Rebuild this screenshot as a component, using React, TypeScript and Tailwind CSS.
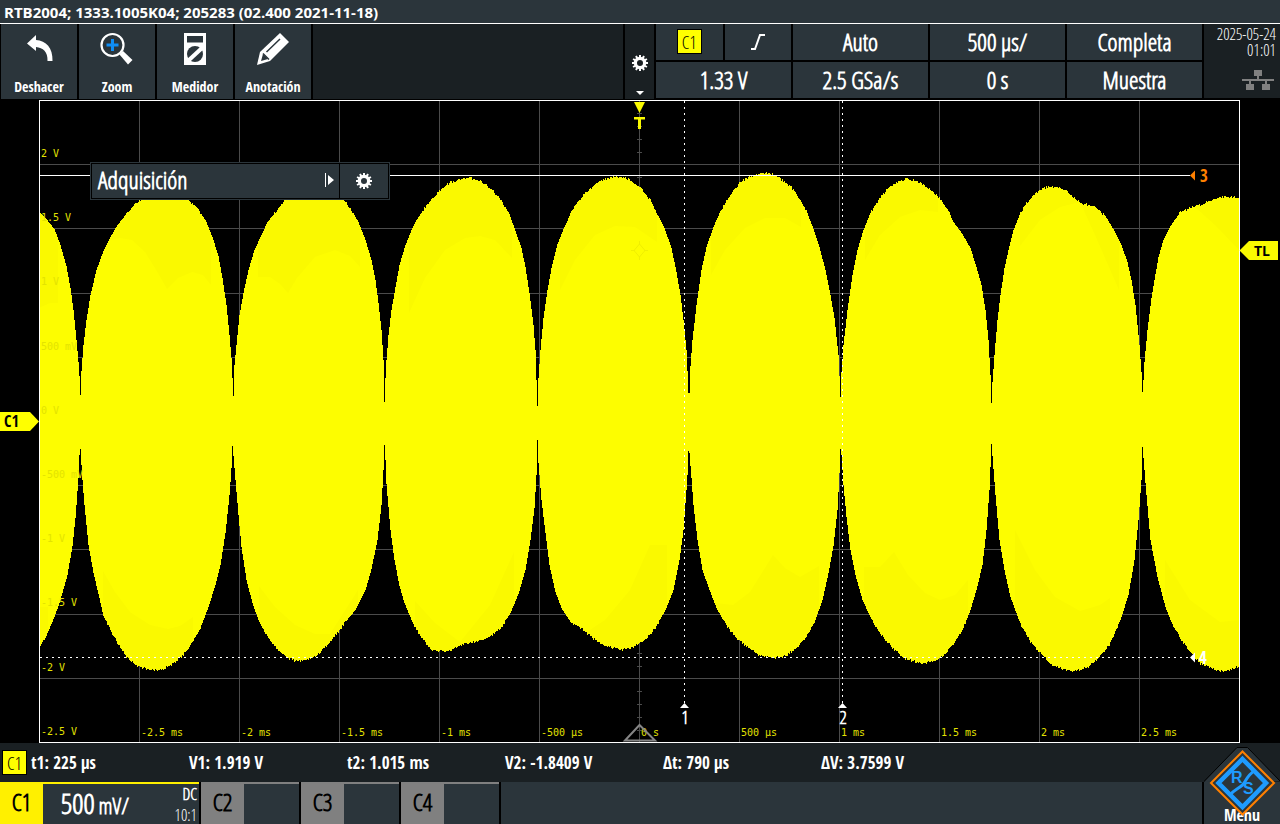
import type { ReactNode } from 'react';

type Point = [number, number];

const UPPER: Point[] = [
  [39, 212], [45, 218], [54, 229], [60, 245], [66, 266], [70, 288], [73, 310], [76, 340], [78, 362], [79, 376], [80, 395],
  [81, 371], [83, 345], [86, 320], [90, 295], [96, 270], [103, 251], [110, 237], [117, 225], [125, 215], [132, 207], [138, 201],
  [155, 191], [172, 191], [187, 199], [196, 207], [205, 220], [212, 237], [218, 256], [222, 278], [226, 305], [229, 335],
  [231, 358], [232, 378], [233, 396], [234, 365], [236, 345], [239, 315], [243, 293], [248, 270], [254, 250], [261, 235],
  [267, 222], [275, 212], [285, 200], [300, 190], [325, 188], [343, 200], [350, 208], [358, 222], [365, 240], [371, 260],
  [375, 280], [378, 303], [381, 330], [383, 360], [384, 402], [385, 378], [386, 360], [388, 335], [391, 310], [394, 293],
  [399, 265], [405, 245], [411, 230], [415, 222], [424, 208], [434, 196], [440, 190], [450, 182], [462, 179], [470, 178],
  [482, 182], [490, 188], [500, 199], [509, 214], [515, 231], [521, 248], [525, 267], [529, 293], [533, 325], [535, 350],
  [536, 380], [537, 406], [538, 378], [540, 350], [543, 318], [547, 290], [551, 268], [557, 244], [564, 227], [570, 214],
  [577, 202], [585, 193], [596, 183], [608, 178], [615, 176], [628, 179], [640, 188], [650, 200], [656, 212], [664, 228],
  [671, 248], [676, 272], [680, 295], [683, 320], [686, 350], [687, 371], [688, 393], [689, 393], [690, 366], [692, 340],
  [696, 305], [701, 270], [706, 247], [713, 227], [720, 211], [730, 195], [740, 182], [750, 176], [763, 173], [772, 174],
  [783, 181], [790, 186], [800, 200], [806, 211], [812, 226], [819, 247], [825, 270], [830, 295], [834, 318], [838, 355],
  [839, 376], [840, 397], [841, 372], [843, 345], [847, 310], [852, 275], [857, 250], [863, 230], [870, 213], [880, 197],
  [890, 186], [900, 180], [908, 179], [920, 182], [930, 190], [940, 199], [948, 211], [953, 222], [962, 234], [970, 248],
  [976, 267], [981, 285], [985, 310], [988, 340], [990, 375], [991, 403], [992, 382], [994, 355], [997, 320], [1000, 295],
  [1004, 268], [1008, 250], [1013, 230], [1019, 215], [1026, 203], [1036, 192], [1046, 187], [1055, 187], [1065, 190],
  [1075, 199], [1080, 203], [1093, 206], [1105, 216], [1114, 231], [1121, 245], [1127, 262], [1131, 280], [1135, 305],
  [1139, 345], [1141, 372], [1142, 392], [1143, 380], [1144, 362], [1147, 330], [1151, 298], [1154, 280], [1158, 257],
  [1163, 240], [1170, 226], [1180, 212], [1192, 207], [1200, 205], [1210, 200], [1225, 196], [1239, 198],
];

const LOWER: Point[] = [
  [39, 647], [45, 638], [54, 617], [60, 600], [67, 575], [72, 546], [75, 518], [78, 478], [79, 455], [80, 449], [81, 465],
  [82, 480], [84, 505], [88, 545], [93, 573], [98, 594], [103, 616], [110, 630], [117, 643], [127, 658], [137, 666],
  [150, 670], [160, 670], [172, 664], [182, 656], [192, 643], [200, 628], [208, 607], [215, 585], [220, 565], [225, 533],
  [229, 495], [231, 468], [232, 446], [233, 456], [235, 480], [238, 515], [241, 547], [246, 580], [252, 603], [258, 620],
  [265, 634], [275, 647], [285, 657], [295, 661], [305, 660], [316, 656], [327, 645], [337, 633], [345, 622], [355, 610],
  [365, 590], [371, 569], [377, 540], [381, 505], [383, 470], [384, 445], [385, 460], [386, 484], [390, 530], [394, 560],
  [399, 586], [404, 603], [412, 622], [420, 637], [432, 650], [445, 652], [453, 649], [464, 643], [480, 641], [490, 636],
  [500, 629], [510, 613], [518, 594], [525, 570], [530, 540], [534, 508], [536, 475], [537, 440], [538, 463], [541, 500],
  [545, 533], [549, 565], [555, 592], [561, 608], [570, 622], [582, 629], [592, 638], [605, 646], [620, 650], [633, 647],
  [645, 640], [655, 628], [665, 610], [673, 590], [679, 560], [683, 530], [686, 490], [687, 475], [688, 451], [689, 453],
  [691, 478], [693, 505], [697, 540], [702, 570], [708, 587], [716, 608], [725, 624], [735, 637], [747, 647], [760, 656],
  [774, 658], [785, 656], [797, 647], [806, 637], [815, 620], [822, 600], [828, 573], [833, 546], [837, 510], [839, 473],
  [840, 449], [841, 455], [843, 485], [846, 517], [850, 550], [855, 575], [862, 600], [870, 617], [880, 634], [893, 649],
  [905, 659], [920, 663], [932, 662], [942, 656], [952, 645], [962, 630], [970, 610], [976, 590], [982, 565], [986, 530],
  [989, 490], [991, 444], [992, 456], [995, 495], [999, 540], [1004, 570], [1010, 597], [1020, 624], [1030, 642],
  [1041, 654], [1050, 664], [1062, 669], [1075, 671], [1088, 667], [1098, 658], [1109, 645], [1115, 631], [1120, 620],
  [1128, 595], [1134, 560], [1138, 520], [1141, 480], [1142, 447], [1143, 458], [1146, 495], [1150, 540], [1157, 577],
  [1165, 607], [1170, 620], [1180, 639], [1192, 654], [1200, 664], [1215, 670], [1225, 671], [1239, 666],
];

function sample(points: Point[], x: number): number {
  const next = points.findIndex((p) => p[0] >= x);
  if (next <= 0) return points[0][1];
  const [x0, y0] = points[next - 1];
  const [x1, y1] = points[next];
  return y0 + ((y1 - y0) * (x - x0)) / (x1 - x0);
}

function jitter(x: number, seed: number): number {
  const n = Math.sin(x * 12.9898 + seed) * 43758.5453;
  return Math.round((n - Math.floor(n)) * 2 - 1);
}

function buildWave(): string {
  const parts: string[] = [];
  for (let x = 40; x < 1239; x++) {
    const top = Math.round(sample(UPPER, x));
    const bottom = Math.round(sample(LOWER, x));
    const y0 = top < 215 ? top + jitter(x, 1) : top;
    const y1 = bottom > 620 ? bottom + jitter(x, 5) : bottom;
    parts.push(`M${x} ${y0}h1V${y1}h-1z`);
  }
  return parts.join('');
}

const WAVE = buildWave();

const SHADES = [
  'M39 170V308L50 303H58V170z',
  'M110 170V240L120 238L132 240L145 252L158 273L167 289L178 278L192 272L203 275L211 285V170z',
  'M258 170V277H270L280 284L288 293L297 278L315 257L335 250L350 256L360 267V170z',
  'M409 170V313L425 278L445 250L465 238L480 236L495 240L512 258V170z',
  'M560 170V290L575 260L595 235L615 226L635 227L657 242V170z',
  'M711 170V275L725 250L745 228L765 218L785 218L801 227V170z',
  'M865 170V260L880 235L900 217L920 210L938 212V170z',
  'M1020 170V246L1040 220L1060 207L1080 202L1095 235L1119 290V170z',
  'M1195 170V207L1215 225L1239 250V170z',
  'M39 680V607H48V680z',
  'M103 680V571L115 592L130 612L150 625L168 629L180 626L193 617V680z',
  'M259 680V586L275 607L295 625L315 634L330 634L358 590V680z',
  'M415 680V601L435 623L460 642L490 605L514 552V680z',
  'M575 680V630H590L605 620L630 590L650 545H667V680z',
  'M715 680V603L733 605L750 592L773 555L785 568L800 577L819 566V680z',
  'M864 680V567H880L894 552L908 575L925 593L940 600L955 595L968 580V680z',
  'M1015 680V530L1035 570L1055 597L1080 611L1100 605L1110 598V680z',
  'M1165 680V560L1190 600L1220 622L1239 620V680z',
];

const GRID_X = [139, 239, 339, 439, 539, 639, 739, 839, 939, 1039, 1139];
const GRID_Y = [164, 228, 293, 357, 421, 485, 549, 614, 678];
const VOLT_LABELS = ['2 V', '1.5 V', '1 V', '500 mV', '0 V', '-500 mV', '-1 V', '-1.5 V', '-2 V', '-2.5 V'];
const TIME_LABELS = ['-2.5 ms', '-2 ms', '-1.5 ms', '-1 ms', '-500 µs', '0 s', '500 µs', '1 ms', '1.5 ms', '2 ms', '2.5 ms'];
const TICKS = Array.from({ length: 49 }, (_, i) => Math.round(113 + i * 12.85));

function Plot() {
  return (
    <svg viewBox="0 99 1280 644" className="block h-auto w-full bg-black" role="img" aria-label="C1">
      <defs>
        <clipPath id="wave">
          <path d={WAVE} />
        </clipPath>
      </defs>
      <g fill="none" stroke="#4b4b4b" shapeRendering="crispEdges">
        {GRID_X.map((x) => (
          <path key={x} d={`M${x + 0.5} 101V742`} />
        ))}
        {GRID_Y.map((y) => (
          <path key={y} d={`M40 ${y + 0.5}H1239`} />
        ))}
        {TICKS.map((y) => (
          <path key={y} d={`M637 ${y + 0.5}h5`} />
        ))}
      </g>
      <path d={WAVE} fill="#fdfd00" shapeRendering="crispEdges" />
      <g clipPath="url(#wave)" fill="#faf900">
        {SHADES.map((d) => (
          <path key={d} d={d} />
        ))}
      </g>
      <g fill="#e3e300" className="font-['DejaVu_Sans_Mono',monospace] text-[10px]">
        {VOLT_LABELS.map((t, i) => (
          <text key={t} x={41} y={Math.round(157 + i * 64.2)}>{t}</text>
        ))}
        {TIME_LABELS.map((t, i) => (
          <text key={t} x={141 + i * 100} y={736}>{t}</text>
        ))}
      </g>
      <path d="M639.5 244l5.500 6.500-5.500 6.500-5.500-6.500zM639.500 241v4M639.500 256v4M631 250.500h4M644 250.500h4" fill="none" stroke="#f0ef00" />
      <path d="M625 740.500L639.500 725L655 740.500z" fill="none" stroke="#858585" strokeWidth="2" />
      <g fill="none" stroke="#fff" shapeRendering="crispEdges">
        <path d="M39.500 742.500V100.500H1239.500V742.500z" />
        <path d="M40 175.500H1190" />
        <path d="M40 657.500H1190" strokeDasharray="2 4" />
        <path d="M684.500 101V703M842.500 101V703" strokeDasharray="2 4" />
      </g>
      <path d="M1190 175.500l5-5v10z" fill="#ff8000" />
      <path d="M1190 657.500l5-5v10zM680 708h9l-4.500-5zM838 708h9l-4.500-5z" fill="#fff" />
      <g className="font-['Open_Sans_Condensed','Roboto',sans-serif] text-[17px] font-bold" fill="#fff" textAnchor="middle">
        <text x="1204" y="182" fill="#ff8000">3</text>
        <text x="1203" y="664">4</text>
      </g>
      <g className="font-['Open_Sans_Condensed_Light','Roboto',sans-serif] text-[18px] font-bold" fill="#fff" textAnchor="middle">
        <text x="685" y="724">1</text>
        <text x="843" y="724">2</text>
      </g>
      <path d="M634 102h11l-5.500 11z" fill="#fafa00" />
      <path d="M634 117h11v2.500h-4v9.500h-3v-9.500h-4z" fill="#fafa00" />
      <path d="M0 412H30L39 421.500L30 431H0z" fill="#ff0" />
      <path d="M1239.500 250.500L1249 241H1278V260H1249z" fill="#fafa00" />
      <text x="4" y="427" className="font-['Open_Sans_Condensed','Roboto',sans-serif] text-[16px] font-bold">C1</text>
      <text x="1254" y="256" className="font-['Open_Sans',sans-serif] text-[14px] font-bold">TL</text>
    </svg>
  );
}

function Gear() {
  return (
    <svg width="16" height="16" viewBox="-8 -8 16 16" aria-hidden="true">
      <circle r="4.600" fill="none" stroke="#fff" strokeWidth="3.200" />
      <g stroke="#fff" strokeWidth="2">
        {[0, 30, 60, 90, 120, 150].map((a) => (
          <path key={a} d="M0-8V-5.500M0 5.500V8" transform={`rotate(${a})`} />
        ))}
      </g>
    </svg>
  );
}

function ToolButton({ label, children }: { label: string; children: ReactNode }) {
  return (
    <button type="button" className="flex h-[76px] w-[76px] flex-col items-center justify-between bg-[#2b353b] pt-2 pb-1 text-[14px] leading-[18px] font-bold">
      <svg width="34" height="34" viewBox="0 0 34 34" aria-hidden="true">{children}</svg>
      {label}
    </button>
  );
}

function Cell({ children, label }: { children: ReactNode; label?: string }) {
  return (
    <button type="button" aria-label={label} className="flex h-full w-full items-center justify-center bg-[#2b353b] pb-px font-['Open_Sans_Condensed_Light','Roboto',sans-serif] text-[24px] leading-6 font-bold">
      {children}
    </button>
  );
}

function SourceBadge() {
  return (
    <span className="flex h-[25px] w-[25px] items-center justify-center border border-black bg-[#ff0] font-['Open_Sans_Condensed_Light','Roboto',sans-serif] text-[18px] leading-5 font-light text-black">C1</span>
  );
}

const READOUTS = ['t1: 225 µs', 'V1: 1.919 V', 't2: 1.015 ms', 'V2: -1.8409 V', 'Δt: 790 µs', 'ΔV: 3.7599 V'];

export default function App() {
  return (
    <div className="w-full overflow-hidden bg-black font-['Open_Sans_Condensed','Roboto',sans-serif] text-white">
      <header className="h-6 border-b border-white bg-[#2b353b] pl-1">
        <h1 className="font-['Open_Sans',sans-serif] text-[15px] leading-6 font-bold">RTB2004; 1333.1005K04; 205283 (02.400 2021-11-18)</h1>
      </header>

      <nav className="flex h-[75px] gap-[2px] pl-px">
        <ToolButton label="Deshacer">
          <path d="M5 11.500L14 3v5C24 8.500 31 16 30.500 29h-5C26 20 21 15.500 14 15v4z" fill="#fff" />
        </ToolButton>
        <ToolButton label="Zoom">
          <circle cx="12.500" cy="13" r="11" fill="none" stroke="#fff" strokeWidth="2.200" />
          <path d="M19.500 22.500L23 19l9.500 9-4.500 4.500z" fill="#fff" />
          <path d="M12.500 7v12M6.500 13h12" stroke="#0f8df5" strokeWidth="3" />
        </ToolButton>
        <ToolButton label="Medidor">
          <path d="M6 1h22v32H6zM9 4v6.500h16V4z" fill="#fff" fillRule="evenodd" />
          <circle cx="17" cy="22" r="8" fill="#2b353b" />
          <path d="M11 28L24 16" stroke="#fff" strokeWidth="4" />
        </ToolButton>
        <ToolButton label="Anotación">
          <path d="M1 33L4 20L24 1L33 10L14 29z" fill="#fff" />
          <path d="M5 29l2-7 5 5z" fill="#2b353b" />
          <path d="M10.500 20L24 7M7 21.500l6 6" stroke="#2b353b" strokeWidth="1.500" />
        </ToolButton>
        <div className="min-w-0 flex-1 bg-[#1a2023]" />
        <button type="button" aria-label="Configuración" className="flex w-[29px] flex-col items-center justify-end gap-5 bg-[#1a2023] pb-1">
          <Gear />
          <svg width="8" height="4" viewBox="0 0 8 4" aria-hidden="true"><path d="M0 0h8L4 4z" fill="#fff" /></svg>
        </button>
        <div className="grid w-[546px] grid-cols-4 grid-rows-2 gap-[2px] pb-px">
          <div className="grid grid-cols-2 gap-[2px]">
            <Cell><SourceBadge /></Cell>
            <Cell label="Flanco">
              <svg width="14" height="18" viewBox="0 0 14 18" aria-hidden="true"><path d="M0 16h4L9 2h5" fill="none" stroke="#fff" strokeWidth="2" /></svg>
            </Cell>
          </div>
          <Cell>Auto</Cell>
          <Cell>500 µs/</Cell>
          <Cell>Completa</Cell>
          <Cell>1.33 V</Cell>
          <Cell>2.5 GSa/s</Cell>
          <Cell>0 s</Cell>
          <Cell>Muestra</Cell>
        </div>
        <div className="mb-px flex w-[76px] flex-col items-end bg-[#1a2023] pt-[2px] pr-1 font-['Open_Sans_Condensed_Light','Roboto',sans-serif] text-[16px] leading-4 font-light whitespace-nowrap text-white">
          <time>2025-05-24</time>
          <time>01:01</time>
          <svg width="32" height="20" viewBox="0 0 32 20" className="mt-3 mr-[2px] shrink-0" aria-label="LAN">
            <path d="M12 0h8v6h-3v3h15v2h-7v3h3v6h-8v-6h3v-3H9v3h3v6H4v-6h3v-3H0V9h15V6h-3z" fill="#808080" />
          </svg>
        </div>
      </nav>

      <main className="relative">
        <Plot />
        <div className="absolute top-[63px] left-[90px] flex h-[38px] w-[300px] gap-px border border-[#2b353b] bg-black p-px">
          <button type="button" className="flex flex-1 items-center justify-between bg-[#2b353b] pr-[5px] pb-[2px] pl-[6px] font-['Open_Sans_Condensed_Light','Roboto',sans-serif] text-[24px] leading-6 font-bold">
            Adquisición
            <svg width="9" height="14" viewBox="0 0 9 14" aria-hidden="true"><path d="M0 0h1v14H0zM3 2l6 5-6 5z" fill="#fff" /></svg>
          </button>
          <button type="button" aria-label="Ajustes" className="flex w-12 items-center justify-center bg-[#2b353b]"><Gear /></button>
        </div>
      </main>

      <section className="flex h-[39px] items-center gap-1 bg-[#1a2023] pl-[2px] text-[17px] leading-6 font-bold">
        <SourceBadge />
        <div className="flex">
          {READOUTS.map((r) => (
            <span key={r} className="w-[158px]">{r}</span>
          ))}
        </div>
      </section>

      <footer className="flex h-[42px] gap-[2px] font-['Open_Sans_Condensed_Light','Roboto',sans-serif] font-bold">
        <button type="button" className="flex w-[199px] border-t-2 border-[#fff000] bg-[#2b353b]">
          <span className="flex h-full w-[43px] items-center justify-center bg-[#fff000] pb-1 text-[24px] leading-6 text-black">C1</span>
          <span className="flex flex-1 items-baseline gap-1 self-center pl-[18px] text-[28px] leading-8">500 <span className="text-[22px]">mV/</span></span>
          <span className="flex h-full flex-col items-end justify-between pt-px pr-[2px] text-[16px] leading-[18px]">
            <span>DC</span>
            <span className="font-light">10:1</span>
          </span>
        </button>
        {['C2', 'C3', 'C4'].map((c) => (
          <button key={c} type="button" className="flex w-[98px] border-t-2 border-[#808080] bg-[#2b353b]">
            <span className="flex h-full w-[43px] items-center justify-center bg-[#808080] pb-1 text-[24px] leading-6 text-black">{c}</span>
          </button>
        ))}
        <div className="flex-1 bg-[#2b353b]" />
        <button type="button" className="relative flex w-[76px] items-end justify-center bg-[#2b353b] font-['Open_Sans_Condensed','Roboto',sans-serif] text-[16px] leading-[18px] font-bold">
          Menu
          <svg width="76" height="70" viewBox="1204 746 76 70" className="absolute top-[-36px] left-0" aria-hidden="true">
            <path d="M1204 782L1237 747.500h11L1280 781z" fill="#2b353b" />
            <path d="M1203 782.500L1237 747.500h10.500L1281 782" fill="none" stroke="#000" />
            <path d="M1242.500 751.500L1274 783L1242.500 814.500L1211 783z" fill="#2b353b" stroke="#ff8000" strokeWidth="2" />
            <path d="M1242.500 759L1266 783L1242.500 807L1218.500 783z" fill="none" stroke="#1e9bff" strokeWidth="4.500" />
            <path d="M1255 770.500C1246 776 1246 782 1242.500 785C1238 789 1234 790 1230 795" fill="none" stroke="#1e9bff" strokeWidth="3" />
            <g fill="#1e9bff" className="font-['Liberation_Sans',sans-serif] text-[16px] font-bold">
              <text x="1231" y="783">R</text>
              <text x="1243" y="794">S</text>
            </g>
          </svg>
        </button>
      </footer>
    </div>
  );
}
